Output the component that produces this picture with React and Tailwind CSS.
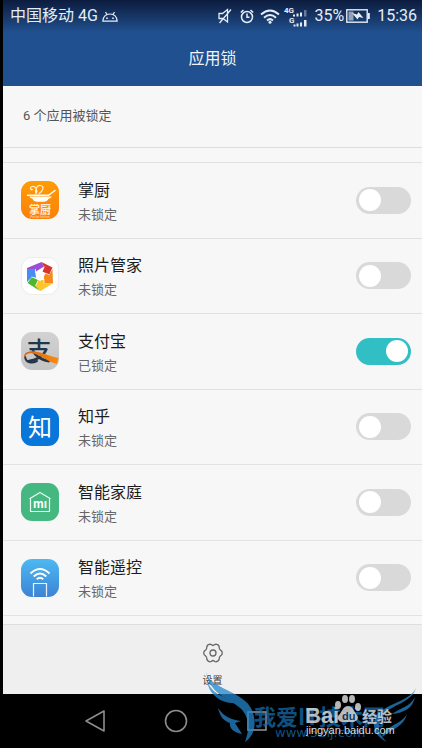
import { useId, useState } from "react";

const CJK = "'Noto Sans CJK SC', sans-serif";

function KitchenIcon() {
  return (
    <svg viewBox="0 0 38 38" className="size-[38px] shrink-0" aria-hidden="true">
      <defs>
        <linearGradient id="kitchen" x1="0" y1="0" x2="0" y2="1">
          <stop offset="0" stopColor="#ff9c04" />
          <stop offset="1" stopColor="#fb7f0c" />
        </linearGradient>
      </defs>
      <rect width="38" height="38" rx="11" fill="url(#kitchen)" />
      <path d="M15 12.500C17 10 15 5 11.500 5.500C8.500 6 9 9.500 11.500 8.500M15 12.500C14 9 15.500 4 19.500 4.500C23.500 5 22.500 9.500 18 12.500" fill="none" stroke="#fff3dc" strokeWidth="1.200" strokeLinecap="round" />
      <path d="M6.500 14.200H27.500L34 9.500" fill="none" stroke="#fff" strokeWidth="1.400" strokeLinecap="round" />
      <path d="M8.500 15.500H30.500C30.500 17 29 17.500 27.800 17.500C27 19.500 25 20.300 23.500 20.800H15.500C13 20.300 12 19.500 11.500 17.500C9.500 17.300 8.500 16.500 8.500 15.500Z" fill="#fff" />
      <text x="19" y="33" textAnchor="middle" fontSize="11" fontWeight="700" fill="#ffeed8" fontFamily={CJK}>掌厨</text>
      <text x="19" y="37" textAnchor="middle" fontSize="3" fill="#ffe2bd" fontFamily="'Liberation Sans', sans-serif">Pocket kitchen</text>
    </svg>
  );
}

function PhotosIcon() {
  return (
    <svg viewBox="0 0 38 38" className="size-[38px] shrink-0" aria-hidden="true">
      <rect x=".5" y=".5" width="37" height="37" rx="11" fill="#fff" stroke="#ececec" />
      <path d="M6 11L20.500 5L23 9.500L15 14.500L14 12H6Z" fill="#9a4fd6" />
      <path d="M20.500 5L31.500 10.500L28 18L21.500 14.500L23 9.500Z" fill="#d8352f" />
      <path d="M31.500 12L32 26.500H23L23 19L25 16L28 18Z" fill="#f68a1a" />
      <path d="M31.500 26.500L19.500 34L14.500 29L17 23L23 23V26.500Z" fill="#fbc62b" />
      <path d="M19 34L6.500 26L11 20L17 23L14.500 29Z" fill="#4db82e" />
      <path d="M6 25V12H14.500L14.500 17L15 21L11 20Z" fill="#4a8df0" />
      <path d="M19 14.500L23 17V21.500L19 24L15 21.500V17Z" fill="#fff" />
      <path d="M14.500 12V16M23.500 9.500L21 14.500M28.500 18L24.500 16M23 26.500V22M14.500 29L17 23.500M10.500 20L14.500 21" stroke="#fff" strokeWidth=".7" />
    </svg>
  );
}

function AlipayIcon() {
  return (
    <svg viewBox="0 0 38 38" className="size-[38px] shrink-0" aria-hidden="true">
      <defs>
        <linearGradient id="alipay" x1="0" y1="0" x2="0" y2="1">
          <stop offset="0" stopColor="#d2d2d2" />
          <stop offset="1" stopColor="#c4c4c4" />
        </linearGradient>
        <linearGradient id="swoosh" x1="0" y1="0" x2="1" y2="0">
          <stop offset="0" stopColor="#c9661c" />
          <stop offset="1" stopColor="#ff8a0a" />
        </linearGradient>
      </defs>
      <rect width="38" height="38" rx="11" fill="url(#alipay)" />
      <text x="18" y="28" textAnchor="middle" fontSize="25" fontWeight="500" fill="#22364c" fontFamily={CJK}>支</text>
      <path d="M4 25C5 31 11 31.500 16 29" fill="none" stroke="#22364c" strokeWidth="2" strokeLinecap="round" />
      <path d="M3.500 27C1.500 21 7 18.800 14 19.500C21 20.200 29 24.500 37.500 26L36 32C27 30 20 23 12 21.500C6 20.500 4 23 3.500 27Z" fill="url(#swoosh)" />
    </svg>
  );
}

function ZhihuIcon() {
  return (
    <svg viewBox="0 0 38 38" className="size-[38px] shrink-0" aria-hidden="true">
      <rect width="38" height="38" rx="11" fill="#0877d9" />
      <text x="19" y="28" textAnchor="middle" fontSize="24" fill="#fff" fontFamily={CJK}>知</text>
    </svg>
  );
}

function HomeIcon() {
  return (
    <svg viewBox="0 0 38 38" className="size-[38px] shrink-0" aria-hidden="true">
      <rect width="38" height="38" rx="11" fill="#45b780" />
      <path d="M9.500 15.500V28.500H28.500V15.500M8.500 15.800L19 9.500L29.500 15.800" fill="none" stroke="#e8fff3" strokeWidth="1.200" strokeLinejoin="round" />
      <text x="19" y="25" textAnchor="middle" fontSize="12" fontWeight="700" fill="#fff" fontFamily="'Liberation Sans', sans-serif">mı</text>
    </svg>
  );
}

function RemoteIcon() {
  return (
    <svg viewBox="0 0 38 38" className="size-[38px] shrink-0" aria-hidden="true">
      <defs>
        <linearGradient id="remote" x1="0" y1="0" x2="0" y2="1">
          <stop offset="0" stopColor="#4db9f2" />
          <stop offset="1" stopColor="#3d83d4" />
        </linearGradient>
      </defs>
      <rect width="38" height="38" rx="11" fill="url(#remote)" />
      <path d="M9.500 14.500Q19 5.500 28.500 14.500M12.700 17.500Q19 11.500 25.300 17.500M15.800 20.300Q19 17.300 22.200 20.300" fill="none" stroke="#fff" strokeWidth="2" />
      <path d="M12.500 37.500V24.500H25.500V37.500" fill="none" stroke="#e4f3ff" strokeWidth="1.200" />
    </svg>
  );
}

const APPS = [
  { name: "掌厨", Icon: KitchenIcon, locked: false },
  { name: "照片管家", Icon: PhotosIcon, locked: false },
  { name: "支付宝", Icon: AlipayIcon, locked: true },
  { name: "知乎", Icon: ZhihuIcon, locked: false },
  { name: "智能家庭", Icon: HomeIcon, locked: false },
  { name: "智能遥控", Icon: RemoteIcon, locked: false },
];

function StatusBar() {
  return (
    <div className="flex h-8 items-center justify-between bg-linear-to-b from-[#0c1c3e] to-[#20508f] pl-[7px] pr-[5px] text-base leading-8 text-[#e6edf5]">
      <div className="flex items-center gap-1">
        <span>中国移动 4G</span>
        <svg viewBox="0 0 16 11" className="h-[11px] w-4" fill="none" stroke="currentColor" strokeWidth="1.200" aria-hidden="true">
          <path d="M.8 10.200C1.200 5.500 4 3 8 3S14.800 5.500 15.200 10.200ZM3.500 1L5 3.500M12.500 1L11 3.500" />
          <path d="M5 6.500V8M11 6.500V8" strokeWidth="1.600" />
        </svg>
      </div>
      <div className="flex items-center">
        <svg viewBox="0 0 14 16" className="mr-2 h-4 w-3.5" fill="none" stroke="currentColor" strokeWidth="1.300" aria-hidden="true">
          <path d="M1 5.500H4.500L9.500 1.500V14L5 10.500H1ZM13 1.500L1.500 15" />
        </svg>
        <svg viewBox="0 0 14 15" className="mr-1.5 h-[15px] w-3.5" fill="none" stroke="currentColor" strokeWidth="1.500" aria-hidden="true">
          <circle cx="7" cy="8" r="5.500" />
          <path d="M7 4.500V8.200H9.500M.8 3.500L3.500 1M13.200 3.500L10.500 1" />
        </svg>
        <svg viewBox="0 0 20 15" className="mr-1 h-[15px] w-5" fill="none" stroke="currentColor" strokeWidth="2" aria-hidden="true">
          <path d="M1 5.500Q10 -2.500 19 5.500M4 8.700Q10 3.200 16 8.700M7 11.500Q10 8.800 13 11.500" />
          <circle cx="10" cy="13.200" r="1.500" fill="currentColor" stroke="none" />
        </svg>
        <svg viewBox="0 0 24 22" className="mr-1.5 h-[22px] w-6" fill="currentColor" aria-hidden="true">
          <text x="0" y="8" fontSize="8" fontWeight="700" fontFamily="Roboto, sans-serif">4G</text>
          <text x="5" y="18" fontSize="8" fontWeight="700" fontFamily="Roboto, sans-serif">G</text>
          <path d="M9 9.500h2v2H9zM12.500 8.500h2v3h-2zM16 7.500h2v4h-2zM9.500 19.500h2v2h-2zM12.500 18.500h2v3h-2zM16 17.500h2v4h-2zM20 15h2.500v6.500H20z" />
          <path d="M20 5h2.500v6.500H20z" opacity=".4" />
        </svg>
        <span>35%</span>
        <svg viewBox="0 0 24 14" className="ml-0.5 mr-[7px] h-3.5 w-6" aria-hidden="true">
          <rect x=".8" y=".8" width="20.400" height="12.400" fill="none" stroke="currentColor" strokeWidth="1.400" />
          <path d="M22 4h1.800v6H22z" fill="currentColor" />
          <path d="M2.500 2.500h5v9h-5z" fill="currentColor" opacity=".6" />
          <path d="M6 4L11 5.500L12.500 3L17.500 9L13 8L11.500 10.500Z" fill="currentColor" />
        </svg>
        <span>15:36</span>
      </div>
    </div>
  );
}

function AppRow({ name, Icon, locked }) {
  const id = useId();
  const [on, setOn] = useState(locked);
  return (
    <li className="flex min-h-[75px] flex-1 items-center border-b border-[#e2e2e2] pl-[18px] pr-[11px]">
      <Icon />
      <label htmlFor={id} className="ml-[19px] flex flex-1 flex-col pt-[5px]">
        <span className="text-base leading-6 text-[#1c1c1c]">{name}</span>
        <span className="text-[13px] leading-6 text-[#666]">{on ? "已锁定" : "未锁定"}</span>
      </label>
      <input
        id={id}
        type="checkbox"
        role="switch"
        checked={on}
        onChange={(e) => setOn(e.target.checked)}
        className="flex h-[27px] w-[55px] shrink-0 cursor-pointer appearance-none items-center rounded-full bg-[#d9d9d9] px-[3px] before:size-[22px] before:rounded-full before:bg-white checked:justify-end checked:bg-[#31bfc5]"
      />
    </li>
  );
}

function Watermark() {
  return (
    <svg viewBox="0 0 222 78" className="pointer-events-none absolute bottom-0 right-0 h-[78px] w-[222px]" aria-hidden="true">
      <g fill="#2486cc" opacity=".75">
        <path d="M6 2C10 19 44 21 52 40C57 53 55 65 45 72C49 61 50 50 43 41C35 30 10 27 6 2Z" />
        <path d="M7 10C11 23 22 28 42 32C26 36 9 28 7 10Z" />
        <path d="M18 38C24 47 32 50 41 51L35 53L42 64C33 62 29 58 30 53C24 51 20 47 18 38Z" />
        <path d="M216 18C212 34 184 36 180 50C177 59 180 66 187 72C176 67 172 58 175 49C180 34 209 33 216 18Z" />
        <path d="M215 27C213 38 204 43 192 44C200 38 210 37 215 27Z" />
        <path d="M207 44C204 56 194 58 182 67C184 56 201 55 207 44Z" />
      </g>
      <g fill="#1673b8" opacity=".7">
        <text x="54" y="55" fontSize="22" fontWeight="700" fontFamily={CJK}>我爱IT技术网</text>
        <text x="75" y="67" fontSize="13" fontFamily="'DejaVu Sans', sans-serif">www.52ij.com</text>
      </g>
      <g fill="#d8d8d8" opacity=".85">
        <text x="105" y="53" fontSize="22" fontWeight="700" fontFamily="'Liberation Sans', sans-serif">Bai</text>
        <ellipse cx="138" cy="35" rx="3" ry="4" />
        <ellipse cx="145" cy="29" rx="3" ry="4" />
        <ellipse cx="152" cy="29" rx="3" ry="4" />
        <ellipse cx="158" cy="37" rx="3" ry="4" />
        <path d="M148 36C153 36 154 42 157 45C160 49 155 53 151 52H144C140 53 136 49 139 45C142 42 143 36 148 36Z" />
        <text x="142" y="50" fontSize="11" fontWeight="700" fill="#123c5c" fontFamily="'Liberation Sans', sans-serif">du</text>
        <text x="162" y="52" fontSize="15" fontWeight="700" fontFamily={CJK}>经验</text>
      </g>
      <text x="106" y="64" fontSize="11" fill="#dcdcdc" fontFamily="'Liberation Sans', sans-serif">jingyan.baidu.com</text>
    </svg>
  );
}

export default function App() {
  return (
    <div className="relative flex min-h-screen flex-col bg-black font-[Roboto,'Noto_Sans_CJK_SC',sans-serif]">
      <div className="ml-[3px] flex flex-1 flex-col bg-[#f7f7f7]">
        <header className="bg-[#20508f]">
          <StatusBar />
          <h1 className="h-[54px] text-center text-base leading-[54px] text-[#f1f5fa]">应用锁</h1>
        </header>
        <p className="h-[62px] border-b border-[#dedede] pl-5 text-[13px] leading-[60px] text-[#555]">6 个应用被锁定</p>
        <ul className="mt-3.5 flex flex-1 flex-col border-t border-[#e2e2e2]">
          {APPS.map((app) => (
            <AppRow key={app.name} {...app} />
          ))}
        </ul>
        <footer className="mt-2 flex h-[70px] justify-center border-t border-[#dedede] bg-[#efefef]">
          <button type="button" className="flex flex-col items-center pt-[18px] text-[10px] leading-4 text-[#444]">
            <svg viewBox="0 0 20 20" className="mb-2.5 size-5" fill="none" stroke="#666" strokeWidth="1.300" strokeLinejoin="round" aria-hidden="true">
              <path d="M7 1.200C8.500 1.200 8.600 2.500 10 2.500S11.500 1.200 13 1.200C15 1.600 16 2.600 16.200 3.800C16.200 5.200 16 6 17.200 6.800C18.600 7.500 19.300 8.500 19.300 10S18.600 12.500 17.200 13.200C16 14 16.200 14.800 16.200 16.200C16 17.400 15 18.400 13 18.800C11.500 18.800 11.400 17.500 10 17.500S8.500 18.800 7 18.800C5 18.400 4 17.400 3.800 16.200C3.800 14.800 4 14 2.800 13.200C1.400 12.500 .7 11.500 .7 10S1.400 7.500 2.800 6.800C4 6 3.800 5.200 3.800 3.800C4 2.600 5 1.600 7 1.200Z" />
              <circle cx="10" cy="10" r="3" />
            </svg>
            设置
          </button>
        </footer>
      </div>
      <nav className="flex h-[54px] items-center justify-center gap-[58px] pr-[70px]">
        <button type="button" aria-label="返回">
          <svg viewBox="0 0 22 24" className="h-6 w-[22px]" fill="none" stroke="#8c8c8c" strokeWidth="1.600" strokeLinejoin="round">
            <path d="M20 2V22L2 12Z" />
          </svg>
        </button>
        <button type="button" aria-label="主页">
          <svg viewBox="0 0 24 24" className="size-6" fill="none" stroke="#8c8c8c" strokeWidth="1.600">
            <circle cx="12" cy="12" r="10.500" />
          </svg>
        </button>
        <button type="button" aria-label="最近任务">
          <svg viewBox="0 0 22 22" className="size-[22px]" fill="none" stroke="#8c8c8c" strokeWidth="1.600">
            <rect x="2" y="2" width="18" height="18" />
          </svg>
        </button>
      </nav>
      <Watermark />
    </div>
  );
}
